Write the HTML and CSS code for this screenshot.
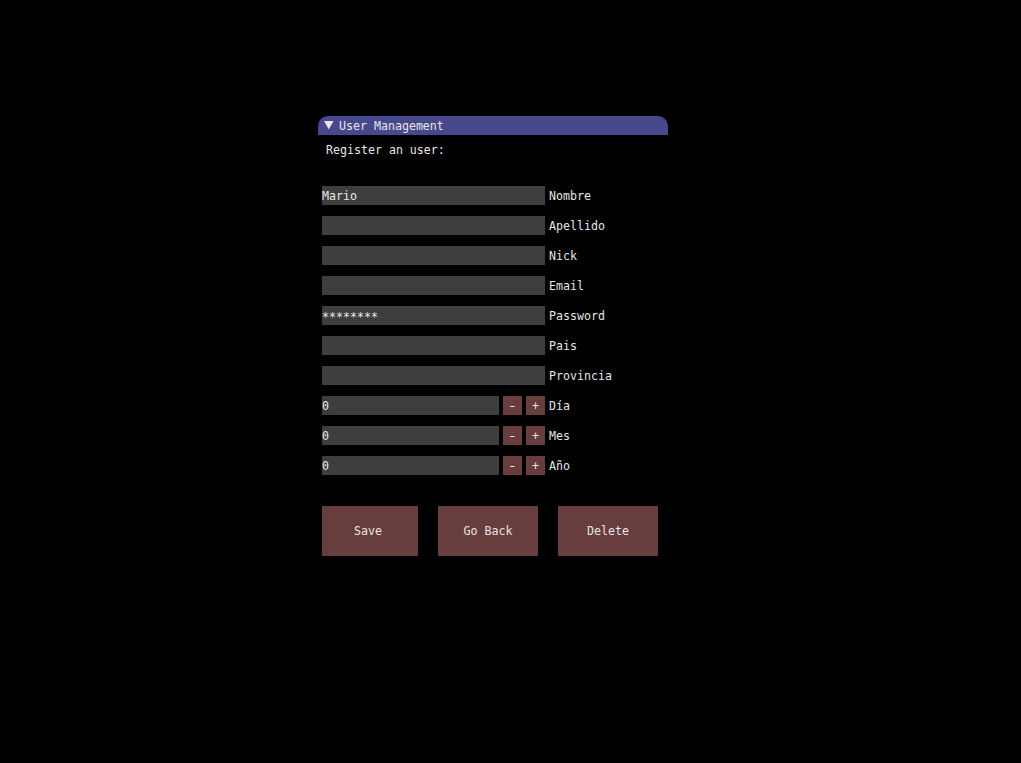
FILE: index.html
```html
<!DOCTYPE html>
<html lang="es">
<head>
<meta charset="utf-8">
<title>User Management</title>
<link rel="stylesheet" href="styles.css">
</head>
<body>
<main class="window">
  <header class="titlebar"><svg class="arrow" width="10" height="9" viewBox="0 0 10 9"><path d="M0 0H9.5L4.75 8.5Z" fill="#e6e6e6"/></svg><span class="title">User Management</span></header>
  <p class="intro">Register an user:</p>
  <div class="fields">
    <div class="row"><div class="input">Mario</div><span>Nombre</span></div>
    <div class="row"><div class="input"></div><span>Apellido</span></div>
    <div class="row"><div class="input"></div><span>Nick</span></div>
    <div class="row"><div class="input"></div><span>Email</span></div>
    <div class="row"><div class="input secret">********</div><span>Password</span></div>
    <div class="row"><div class="input"></div><span>Pais</span></div>
    <div class="row"><div class="input"></div><span>Provincia</span></div>
    <div class="row"><div class="input">0</div><div class="step"><span class="minus">-</span></div><div class="step">+</div><span>Día</span></div>
    <div class="row"><div class="input">0</div><div class="step"><span class="minus">-</span></div><div class="step">+</div><span>Mes</span></div>
    <div class="row"><div class="input">0</div><div class="step"><span class="minus">-</span></div><div class="step">+</div><span>Año</span></div>
  </div>
  <div class="actions"><div class="button save">Save</div><div class="button">Go Back</div><div class="button">Delete</div></div>
</main>
</body>
</html>
```
FILE: styles.css
```css
body {
  margin: 0;
  background: #000;
  color: #e6e6e6;
  font: 11.62px/19px "DejaVu Sans Mono", monospace;
}
.window {
  width: 350px;
  margin: 116px 0 0 318px;
}
.titlebar {
  display: flex;
  align-items: center;
  gap: 5px;
  height: 19px;
  padding: 0 6px;
  border-radius: 10px 10px 0 0;
  background: #48488c;
}
.title {
  line-height: 19px;
  padding-top: 2px;
}
.intro {
  height: 19px;
  margin: 6px 8px 26px;
}
.fields {
  display: grid;
  gap: 11px;
  padding-left: 4px;
}
.row {
  display: grid;
  grid-template-columns: 223px 1fr;
  grid-template-rows: 19px;
  column-gap: 4px;
  line-height: 21px;
}
.row:has(.step) {
  grid-template-columns: 177px 19px 19px 1fr;
}
.input {
  background: #3e3e3e;
}
.secret {
  line-height: 23px;
}
.step {
  background: #673d3d;
  text-align: center;
}
.minus {
  display: inline-block;
  transform: scaleX(1.4);
}
.actions {
  display: grid;
  grid-template-columns: 96px 100px 100px;
  column-gap: 20px;
  margin: 31px 0 0 4px;
}
.button {
  height: 50px;
  background: #673d3d;
  line-height: 50px;
  text-align: center;
}
.save {
  text-indent: -4px;
}
```
